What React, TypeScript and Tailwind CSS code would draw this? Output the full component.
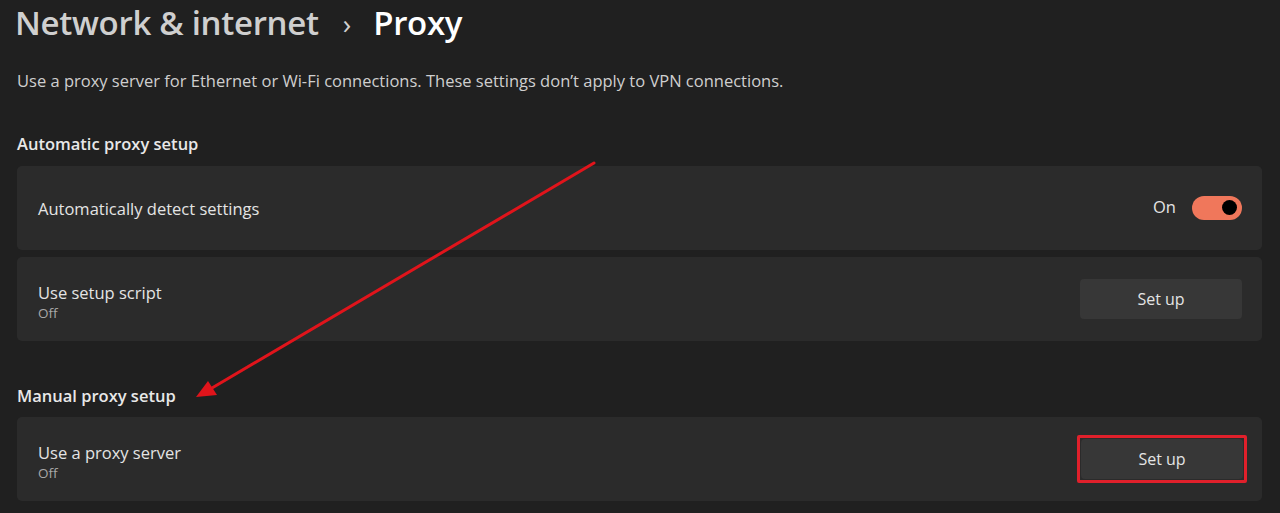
import React from "react";

function SettingCard({
  title,
  sub,
  children,
}: {
  title: string;
  sub?: string;
  children?: React.ReactNode;
}) {
  return (
    <div className="flex h-[84px] items-center justify-between rounded-[5px] bg-[#2b2b2b] pl-[21px] pr-[20px]">
      <div className={`flex flex-col ${sub ? "mt-[6px]" : "mt-[3px]"}`}>
        <span className="text-[16.5px] leading-[22px] text-[#e4e4e4]">{title}</span>
        {sub && <span className="text-[13.5px] leading-[18px] text-[#a8a8a8]">{sub}</span>}
      </div>
      {children}
    </div>
  );
}

function SetupButton() {
  return (
    <button className="flex h-[40px] w-[162px] items-center justify-center rounded-[4px] bg-[#373737] text-[16px] text-[#e4e4e4]">
      Set up
    </button>
  );
}

export default function App() {
  return (
    <div
      className="relative h-[513px] w-[1280px] overflow-hidden bg-[#202020] pl-[17px] pr-[18px]"
      style={{ fontFamily: '"Open Sans", "Noto Sans", sans-serif' }}
    >
      {/* Breadcrumb header */}
      <div className="flex h-[46px] items-center">
        <span className="-ml-[2px] text-[33px] font-semibold tracking-[-0.3px] text-[#cfcfcf]">Network &amp; internet</span>
        <span className="ml-[24px] mr-[22px] text-[28px] text-[#cfcfcf]">›</span>
        <span className="text-[33px] font-semibold tracking-[-0.3px] text-white">Proxy</span>
      </div>

      <p className="mt-[23px] text-[16.5px] text-[#cfcfcf]">
        Use a proxy server for Ethernet or Wi-Fi connections. These settings don’t apply to VPN connections.
      </p>

      <h3 className="mt-[38px] text-[16.5px] font-semibold text-[#e8e8e8]">Automatic proxy setup</h3>

      <div className="mt-[9px] flex flex-col gap-[7px]">
        <SettingCard title="Automatically detect settings">
          <div className="flex items-center gap-[16px]">
            <span className="text-[16.5px] text-[#e4e4e4]">On</span>
            <div className="flex h-[24px] w-[50px] items-center justify-end rounded-full bg-[#f0775b] pr-[5px]">
              <div className="h-[15px] w-[15px] rounded-full bg-black" />
            </div>
          </div>
        </SettingCard>
        <SettingCard title="Use setup script" sub="Off">
          <SetupButton />
        </SettingCard>
      </div>

      <h3 className="mt-[43px] text-[16.5px] font-semibold text-[#e8e8e8]">Manual proxy setup</h3>

      <div className="mt-[9px]">
        <SettingCard title="Use a proxy server" sub="Off">
          <div className="-mr-[5px] rounded-[2px] border-[3px] border-[#e0202b] p-[1px]">
            <SetupButton />
          </div>
        </SettingCard>
      </div>

      {/* Red annotation arrow */}
      <svg className="pointer-events-none absolute left-0 top-0" width="1280" height="513">
        <line x1="594" y1="163" x2="212" y2="388" stroke="#e0141b" strokeWidth="3" strokeLinecap="round" />
        <polygon points="196,397 208,381 217,395" fill="#e0141b" />
      </svg>
    </div>
  );
}
